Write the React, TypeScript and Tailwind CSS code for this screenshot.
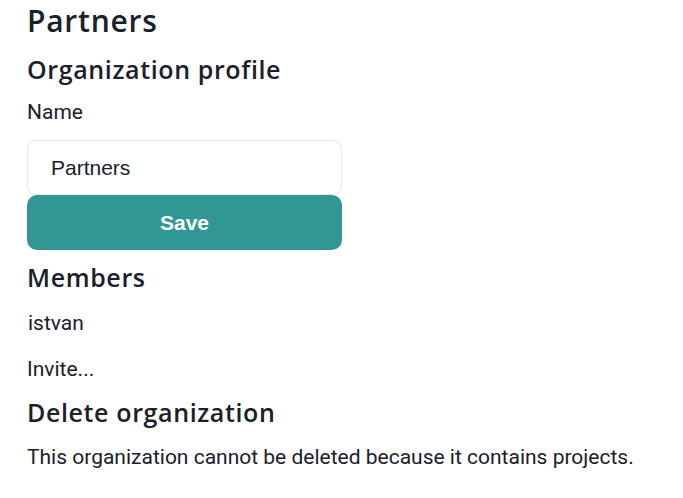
import { FC } from "react";

const heading = "font-['Open_Sans',sans-serif] font-semibold text-[#1a202c]";
const body = "font-['Roboto',sans-serif] text-[21px] leading-[28px] text-[#1a202c]";

const OrgSettings: FC = () => {
  return (
    <div className="flex w-[315px] flex-col">
      <h1 className={`${heading} text-[30px] leading-[42px] tracking-[0.025em]`}>Partners</h1>
      <h2 className={`${heading} mt-[8px] text-[25px] leading-[38px] tracking-[0.025em]`}>
        Organization profile
      </h2>
      <label htmlFor="name" className={`${body} mt-[10px]`}>
        Name
      </label>
      <input
        id="name"
        type="text"
        defaultValue="Partners"
        className="mt-[14px] h-[55px] w-full rounded-[9px] border border-[#e2e8f0] bg-white px-[23px] font-['Liberation_Sans',sans-serif] text-[21px] text-[#1a202c] outline-none"
      />
      <button className="h-[55px] w-full rounded-[10px] bg-[#319795] font-['Liberation_Sans',sans-serif] text-[21px] font-bold text-white">
        Save
      </button>
      <h2 className={`${heading} mt-[8px] text-[25px] leading-[38px] tracking-[0.025em]`}>
        Members
      </h2>
      <span className={`${body} mt-[13px] pl-[1px]`}>istvan</span>
      <span className={`${body} mt-[18px]`}>Invite...</span>
      <h2 className={`${heading} mt-[10px] text-[25px] leading-[38px] tracking-[0.025em]`}>
        Delete organization
      </h2>
      <p className={`${body} mt-[12px] whitespace-nowrap`}>
        This organization cannot be deleted because it contains projects.
      </p>
    </div>
  );
};

export default function App() {
  return (
    <div className="min-h-[498px] bg-white pl-[27px]">
      <OrgSettings />
    </div>
  );
}
